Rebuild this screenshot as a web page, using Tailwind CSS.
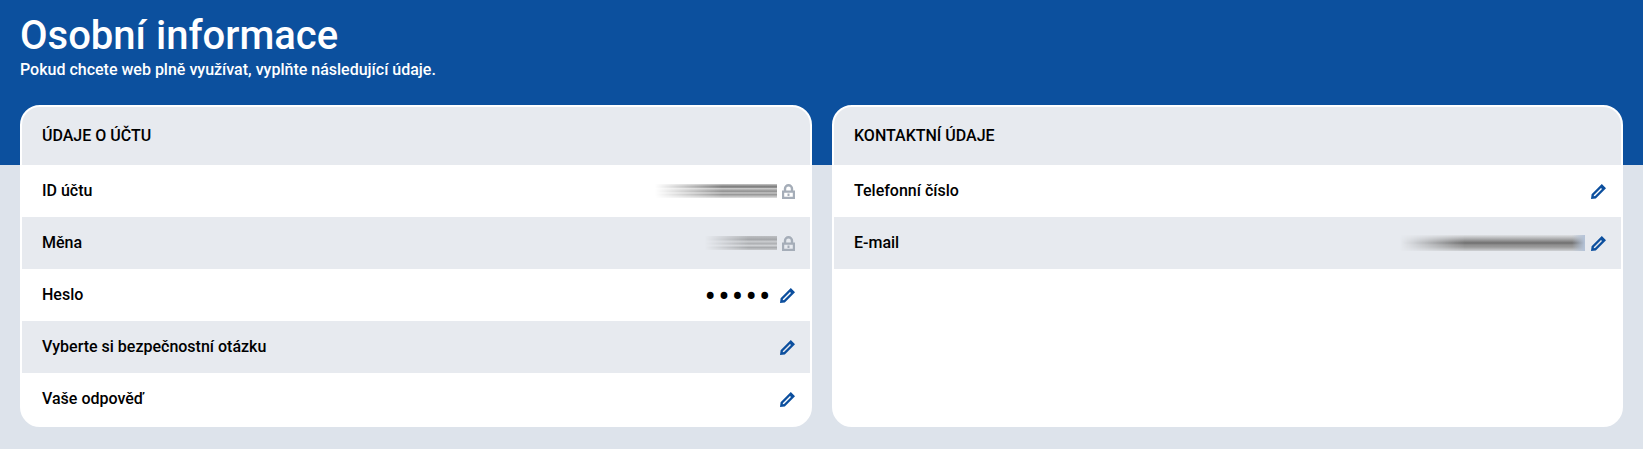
<!DOCTYPE html>
<html lang="cs">
<head>
    <meta charset="UTF-8">
    <title>Osobní informace</title>
    <script src="https://cdn.jsdelivr.net/npm/@tailwindcss/browser@4"></script>
</head>
<body class="bg-[#dde3eb] font-['Roboto',sans-serif] text-black overflow-hidden">
    <svg class="hidden">
        <symbol id="pencil" viewBox="0 0 15 15">
            <path fill="#0c4f9e" fill-rule="evenodd" d="M10.8 0 15 4.2 4.8 14.4 0 15 0.6 10.2zM10 4 3 11 2.7 12.3 4 12 11 5z"/>
        </symbol>
        <symbol id="lock" viewBox="0 0 13 15">
            <path fill="#a5adb8" fill-rule="evenodd" d="M1.800 6.500V4.700a4.700 4.700 0 0 1 9.400 0v1.800H13V15H0V6.500zM4.200 6.500h4.600V4.700a2.300 2.300 0 0 0-4.600 0zM2.200 8.700v4.100h8.600V8.700zM5.500 9.500h2v2.500h-2z"/>
        </symbol>
    </svg>

    <div class="h-[449px] flex flex-col">
        <div class="h-[165px] shrink-0 bg-[#0c509e] px-5 pt-[16px] text-white">
            <h1 class="text-[40px] leading-[40px] font-medium">Osobní informace</h1>
            <p class="text-base leading-5 font-medium mt-[4px]">Pokud chcete web plně využívat, vyplňte následující údaje.</p>
        </div>

        <div class="-mt-[60px] px-5 grid grid-cols-[792px_791px] gap-5">
            <!-- udaje o uctu -->
            <section class="h-[322px] bg-white border-2 border-white rounded-[20px] overflow-hidden">
                <h2 class="h-[58px] bg-[#e7eaef] flex items-center pl-5 text-base font-medium">ÚDAJE O ÚČTU</h2>
                <div class="h-[52px] flex items-center pl-5 pr-[15px] text-base font-medium">
                    <span>ID účtu</span>
                    <div class="ml-auto w-[122px] h-[14px] mr-[5px] [mask-image:linear-gradient(to_right,transparent,black_55%)] bg-[linear-gradient(to_bottom,#c9c9c9,#8a8a8a_14%,#777_22%,#c8c8c8_32%,#a5a5a5_45%,#8f8f8f_52%,#c6c6c6_64%,#999_75%,#b8b8b8_86%,#e2e2e2)]"></div>
                    <svg class="w-[13px] h-[15px]"><use href="#lock"/></svg>
                </div>
                <div class="h-[52px] flex items-center pl-5 pr-[15px] text-base font-medium bg-[#e7eaef]">
                    <span>Měna</span>
                    <div class="ml-auto w-[72px] h-[14px] mr-[5px] [mask-image:linear-gradient(to_right,transparent,black_60%)] bg-[linear-gradient(to_bottom,#bdbfc2,#a6a8ab_25%,#c9cbce_40%,#adafb2_55%,#cfd1d4_68%,#a9abae_82%,#c8cacd)]"></div>
                    <svg class="w-[13px] h-[15px]"><use href="#lock"/></svg>
                </div>
                <div class="h-[52px] flex items-center pl-5 pr-[15px] text-base font-medium">
                    <span>Heslo</span>
                    <span class="ml-auto mr-[7px] mt-[2px] text-[31px] leading-none tracking-[2.8px]">•••••</span>
                    <svg class="w-[15px] h-[15px]"><use href="#pencil"/></svg>
                </div>
                <div class="h-[52px] flex items-center pl-5 pr-[15px] text-base font-medium bg-[#e7eaef]">
                    <span>Vyberte si bezpečnostní otázku</span>
                    <svg class="ml-auto w-[15px] h-[15px]"><use href="#pencil"/></svg>
                </div>
                <div class="h-[52px] flex items-center pl-5 pr-[15px] text-base font-medium">
                    <span>Vaše odpověď</span>
                    <svg class="ml-auto w-[15px] h-[15px]"><use href="#pencil"/></svg>
                </div>
            </section>

            <!-- kontaktni udaje -->
            <section class="h-[322px] bg-white border-2 border-white rounded-[20px] overflow-hidden">
                <h2 class="h-[58px] bg-[#e7eaef] flex items-center pl-5 text-base font-medium">KONTAKTNÍ ÚDAJE</h2>
                <div class="h-[52px] flex items-center pl-5 pr-[15px] text-base font-medium">
                    <span>Telefonní číslo</span>
                    <svg class="ml-auto w-[15px] h-[15px]"><use href="#pencil"/></svg>
                </div>
                <div class="h-[52px] flex items-center pl-5 pr-[15px] text-base font-medium bg-[#e7eaef]">
                    <span>E-mail</span>
                    <div class="ml-auto w-[185px] h-[16px] mr-[6px] [mask-image:linear-gradient(to_right,transparent,black_35%)] bg-[linear-gradient(to_right,transparent_93%,#b4c3d8),linear-gradient(to_bottom,#dfe1e4,#b5b6b8_20%,#8c8c8c_38%,#6f6f6f_50%,#8f8f8f_62%,#9a9a9a_75%,#d0d2d5)]"></div>
                    <svg class="w-[15px] h-[15px]"><use href="#pencil"/></svg>
                </div>
            </section>
        </div>
    </div>
</body>
</html>
